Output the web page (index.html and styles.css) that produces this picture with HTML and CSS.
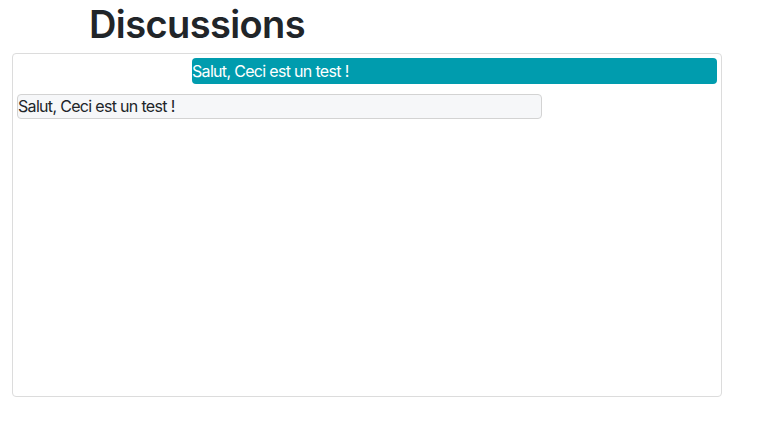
FILE: index.html
```html
<!DOCTYPE html>
<html lang="fr">
<head>
<meta charset="utf-8">
<link rel="stylesheet" href="styles.css">
</head>
<body>
<div class="page">
  <h1 class="title">Discussions</h1>
  <div class="chat">
    <div class="msg msg-out">Salut, Ceci est un test !</div>
    <div class="msg msg-in">Salut, Ceci est un test !</div>
  </div>
</div>
</body>
</html>
```

FILE: styles.css
```css
html, body {
  margin: 0;
  padding: 0;
  background: #fff;
}
body {
  font-family: Inter, "Noto Sans", sans-serif;
  color: #212529;
}
.page {
  padding: 0 0 0 12px;
  width: 710px;
}
.title {
  margin: 0 0 5px 77px;
  font-size: 38px;
  font-weight: 600;
  line-height: 48px;
  letter-spacing: -0.6px;
}
.chat {
  box-sizing: border-box;
  height: 344px;
  border: 1px solid #dcdcdc;
  border-radius: 4px;
  padding: 4px;
  display: flex;
  flex-direction: column;
  gap: 10px;
}
.msg {
  box-sizing: border-box;
  width: 75%;
  font-size: 16px;
  line-height: 26px;
  border-radius: 4px;
  letter-spacing: -0.68px;
}
.msg-out {
  align-self: flex-end;
  background: #009cae;
  color: #fff;
}
.msg-in {
  align-self: flex-start;
  background: #f6f7f9;
  border: 1px solid #d3d3d3;
  line-height: 23px;
}
```
